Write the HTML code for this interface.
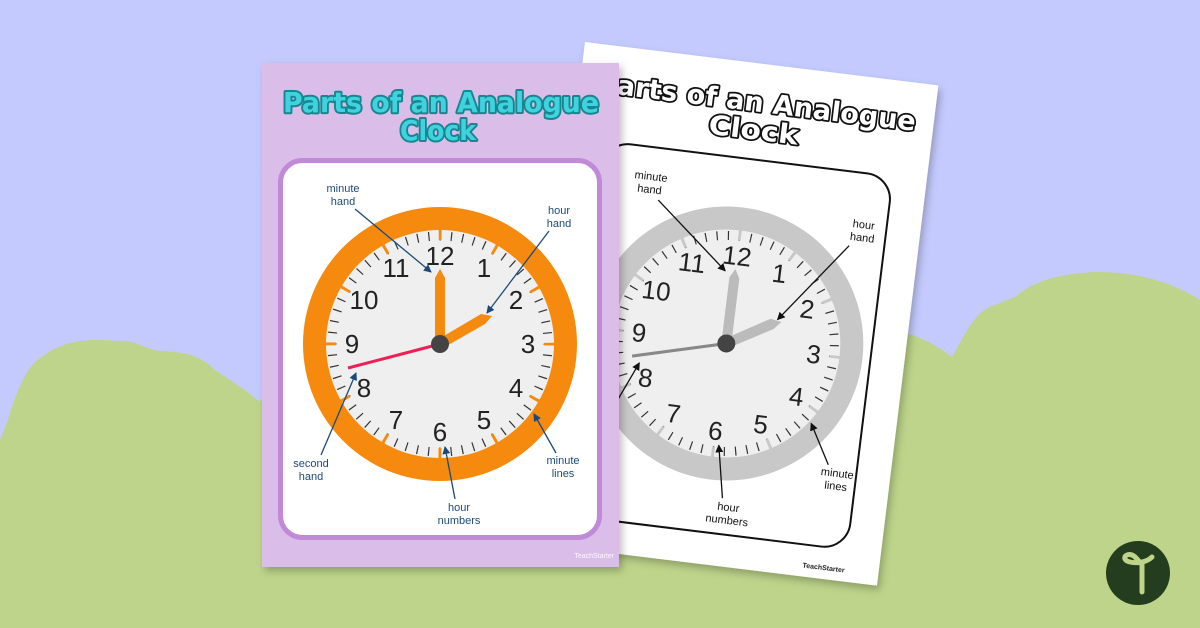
<!DOCTYPE html>
<html><head><meta charset="utf-8"><style>
html,body{margin:0;padding:0;width:1200px;height:628px;overflow:hidden;background:#c4cafd}
svg{display:block}
</style></head><body>
<svg width="1200" height="628" viewBox="0 0 1200 628" xmlns="http://www.w3.org/2000/svg" font-family="'Liberation Sans',sans-serif">
<defs>
<marker id="ab" markerWidth="8" markerHeight="8" refX="7" refY="4" orient="auto" markerUnits="userSpaceOnUse"><path d="M0,0 L8,4 L0,8 z" fill="#1b4a7a"/></marker>
<marker id="ak" markerWidth="8" markerHeight="8" refX="7" refY="4" orient="auto" markerUnits="userSpaceOnUse"><path d="M0,0 L8,4 L0,8 z" fill="#111"/></marker>
<filter id="sh" x="-10%" y="-10%" width="130%" height="130%"><feDropShadow dx="3" dy="4" stdDeviation="4" flood-color="#000" flood-opacity="0.25"/></filter>
</defs>
<rect width="1200" height="628" fill="#c4cafd"/>
<path d="M0,440 L8,420 C15,395 25,372 35,362 C55,345 75,340 95,340 L125,341 C138,342 148,350 160,351 C185,352 200,355 215,370 L245,390 L270,410 L270,628 L0,628 Z" fill="#bdd48a"/>
<path d="M880,345 L905,333 C925,338 940,348 952,357 C965,335 975,310 995,305 L1015,297 C1035,280 1060,274 1095,272 C1130,272 1165,278 1200,300 L1200,628 L880,628 Z" fill="#bdd48a"/>
<rect x="0" y="440" width="1200" height="188" fill="#bdd48a"/>
<rect x="260" y="400" width="700" height="228" fill="#bdd48a"/>

<g transform="translate(585,42) rotate(7)">
<rect x="0" y="0" width="356" height="504" fill="#fff" filter="url(#sh)"/>
<rect x="32" y="96" width="290" height="376" rx="26" fill="#fff" stroke="#111" stroke-width="2"/>
<g font-family="'DejaVu Sans',sans-serif" font-weight="bold" font-size="27" text-anchor="middle" fill="#fff" stroke="#111" stroke-width="3.5" paint-order="stroke" stroke-linejoin="round">
<text x="178" y="48" textLength="320" lengthAdjust="spacingAndGlyphs">Parts of an Analogue</text>
<text x="178" y="76" textLength="90" lengthAdjust="spacingAndGlyphs">Clock</text>
</g>
<text x="322" y="495" font-size="7" font-weight="bold" fill="#222" text-anchor="end">TeachStarter</text>
<g transform="translate(177,282)">
<circle r="137" fill="#c8c8c8"/>
<circle r="114" fill="#efefef"/>
<circle r="108" fill="none" stroke="#333" stroke-width="9" stroke-dasharray="1.2 10.11" stroke-dashoffset="0.6"/>
<circle r="112" fill="none" stroke="#c8c8c8" stroke-width="16" stroke-dasharray="3 55.64" stroke-dashoffset="1.5"/>
<g font-size="26" fill="#222" text-anchor="middle" dominant-baseline="central">
<text x="0" y="-88">12</text><text x="44" y="-76">1</text><text x="76" y="-44">2</text><text x="88" y="0">3</text><text x="76" y="44">4</text><text x="44" y="76">5</text><text x="0" y="88">6</text><text x="-44" y="76">7</text><text x="-76" y="44">8</text><text x="-88" y="0">9</text><text x="-76" y="-44">10</text><text x="-44" y="-76">11</text>
</g>
<path d="M-92,24 L0,0" stroke="#888" stroke-width="3"/>
<path d="M-5,0 L-5,-66 L0,-75 L5,-66 L5,0 Z" fill="#bbb"/>
<path d="M-3,-4 L41,-30 L52,-28 L45,-20 L3,4 Z" fill="#bbb"/>
<circle r="9" fill="#444"/>
<g font-size="11" fill="#111" text-anchor="middle">
<text x="-95" y="-153">minute</text><text x="-95" y="-140">hand</text>
<text x="122" y="-131">hour</text><text x="122" y="-118">hand</text>
<text x="22" y="166">hour</text><text x="22" y="179">numbers</text>
<text x="126" y="119">minute</text><text x="126" y="132">lines</text>
</g>
<g stroke="#111" stroke-width="1.3" fill="none" marker-end="url(#ak)">
<path d="M-85,-134 L-10,-72"/><path d="M110,-112 L48,-30"/><path d="M15,154 L5,102"/><path d="M116,108 L94,69"/><path d="M-119,111 L-84,30"/>
</g>
</g>
</g>

<rect x="262" y="63" width="357" height="504" fill="#dbbde9" filter="url(#sh)"/>
<rect x="280.5" y="160.5" width="319" height="377" rx="22" fill="#fff" stroke="#c08ad8" stroke-width="5"/>
<g font-family="'DejaVu Sans',sans-serif" font-weight="bold" font-size="28" text-anchor="middle" fill="#40d3df" stroke="#17868f" stroke-width="4" paint-order="stroke" stroke-linejoin="round">
<text x="441" y="112" textLength="316" lengthAdjust="spacingAndGlyphs">Parts of an Analogue</text>
<text x="438" y="140" textLength="76" lengthAdjust="spacingAndGlyphs">Clock</text>
</g>
<text x="614" y="558" font-size="7" fill="#fff" text-anchor="end" opacity="0.9">TeachStarter</text>
<g transform="translate(440,344)">
<circle r="137" fill="#f58a0f"/>
<circle r="114" fill="#efefef"/>
<circle r="108" fill="none" stroke="#333" stroke-width="9" stroke-dasharray="1.2 10.11" stroke-dashoffset="0.6"/>
<circle r="112" fill="none" stroke="#f58a0f" stroke-width="16" stroke-dasharray="3 55.64" stroke-dashoffset="1.5"/>
<g font-size="26" fill="#222" text-anchor="middle" dominant-baseline="central">
<text x="0" y="-88">12</text><text x="44" y="-76">1</text><text x="76" y="-44">2</text><text x="88" y="0">3</text><text x="76" y="44">4</text><text x="44" y="76">5</text><text x="0" y="88">6</text><text x="-44" y="76">7</text><text x="-76" y="44">8</text><text x="-88" y="0">9</text><text x="-76" y="-44">10</text><text x="-44" y="-76">11</text>
</g>
<path d="M-92,24 L0,0" stroke="#ee1f55" stroke-width="3"/>
<path d="M-5,0 L-5,-66 L0,-75 L5,-66 L5,0 Z" fill="#f58a0f"/>
<path d="M-3,-4 L41,-30 L52,-28 L45,-20 L3,4 Z" fill="#f58a0f"/>
<circle r="9" fill="#444"/>
<g font-size="11" fill="#1b4a7a" text-anchor="middle">
<text x="-97" y="-152">minute</text><text x="-97" y="-139">hand</text>
<text x="119" y="-130">hour</text><text x="119" y="-117">hand</text>
<text x="-129" y="123">second</text><text x="-129" y="136">hand</text>
<text x="19" y="167">hour</text><text x="19" y="180">numbers</text>
<text x="123" y="120">minute</text><text x="123" y="133">lines</text>
</g>
<g stroke="#1b4a7a" stroke-width="1.3" fill="none" marker-end="url(#ab)">
<path d="M-85,-135 L-9,-72"/><path d="M109,-113 L47,-31"/><path d="M-119,111 L-84,29"/><path d="M15,155 L5,103"/><path d="M116,109 L94,70"/>
</g>
</g>

<circle cx="1138" cy="573" r="32" fill="#233d1e"/>
<path d="M1142,592 L1142,564 M1152,557 C1146,563 1134,564 1127,561 C1122,558 1126,553 1132,555 C1137,557 1139,563 1142,564" fill="none" stroke="#bdd48a" stroke-width="5" stroke-linecap="round" stroke-linejoin="round"/>
</svg>
</body></html>
